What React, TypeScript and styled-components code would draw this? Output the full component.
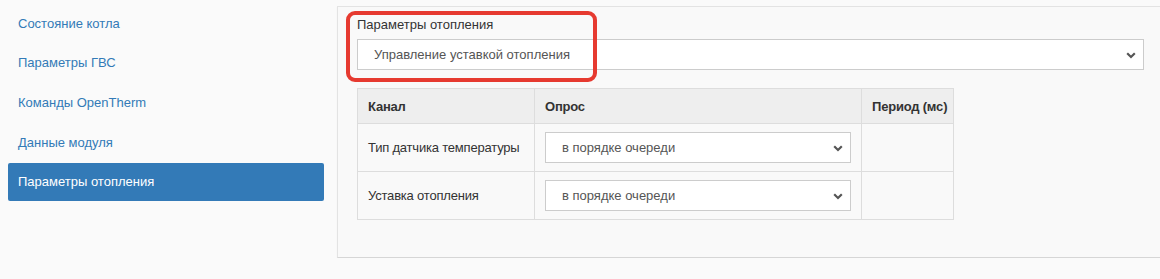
import * as React from 'react'
import styled, { createGlobalStyle } from 'styled-components'

const GlobalStyle = createGlobalStyle`
  html, body {
    margin: 0;
    padding: 0;
    background: #fafafa;
    overflow: hidden;
  }
  body {
    font-family: 'Liberation Sans', Arial, sans-serif;
    font-size: 13px;
    color: #333;
  }
`

const Page = styled.div`
  display: flex;
  align-items: flex-start;
  width: 1180px;
  padding-left: 8px;
  gap: 13px;
`

const Nav = styled.ul`
  list-style: none;
  margin: 4px 0 0;
  padding: 0;
  width: 316px;
  flex: none;
  display: flex;
  flex-direction: column;
  gap: 1.7px;
`

const NavItem = styled.li<{ active?: boolean }>`
  height: 38px;
  display: flex;
  align-items: center;
  padding: 0 10px;
  border-radius: 2px;
  color: ${({ active }) => (active ? '#fff' : '#337ab7')};
  background: ${({ active }) => (active ? '#337ab7' : 'transparent')};
  cursor: pointer;
`

const Panel = styled.section`
  position: relative;
  flex: none;
  width: 827px;
  margin-top: 6px;
  height: 252px;
  box-sizing: border-box;
  padding: 8px 19px 0;
  background: #f9f9f9;
  border: 1px solid #e3e3e3;
  border-bottom-color: #d6d6d6;
  box-shadow: 0 1px 1px rgba(0, 0, 0, 0.05);
`

const Label = styled.label`
  display: block;
  line-height: 19px;
  margin-bottom: 5px;
  color: #333;
`

const SelectWrap = styled.div`
  position: relative;
  width: 100%;
`

const Select = styled.select`
  appearance: none;
  -webkit-appearance: none;
  display: block;
  width: 100%;
  height: 31px;
  box-sizing: border-box;
  padding: 0 30px 0 16px;
  border: 1px solid #ccc;
  border-radius: 0;
  background: #fff;
  color: #555;
  font-family: inherit;
  font-size: 13px;
  outline: none;
`

const Chevron = styled.svg`
  position: absolute;
  right: 8px;
  top: 50%;
  margin-top: -3px;
  pointer-events: none;
`

const Highlight = styled.div`
  position: absolute;
  left: 8px;
  top: 4px;
  width: 251px;
  height: 71px;
  box-sizing: border-box;
  border: 4px solid #e63a30;
  border-radius: 9px;
  pointer-events: none;
`

const Table = styled.table`
  margin-top: 18px;
  width: 596px;
  border-collapse: collapse;
  table-layout: fixed;
`

const Th = styled.th<{ w: number }>`
  width: ${({ w }) => w}px;
  height: 35px;
  box-sizing: border-box;
  padding: 0 10px;
  text-align: left;
  font-weight: bold;
  white-space: nowrap;
  letter-spacing: -0.2px;
  background: #eeeeee;
  border: 1px solid #ddd;
  color: #333;
`

const Td = styled.td`
  height: 48px;
  box-sizing: border-box;
  padding: 0 10px;
  border: 1px solid #ddd;
  color: #333;
  white-space: nowrap;
  letter-spacing: -0.2px;
  vertical-align: middle;
`

const navItems = [
  'Состояние котла',
  'Параметры ГВС',
  'Команды OpenTherm',
  'Данные модуля',
  'Параметры отопления',
]

const rows = ['Тип датчика температуры', 'Уставка отопления']

const DropDown = ({ value }: { value: string }) => (
  <SelectWrap>
    <Select defaultValue={value}>
      <option>{value}</option>
    </Select>
    <Chevron width="10" height="7" viewBox="0 0 10 7">
      <path d="M1.2 1.3 L5 5 L8.8 1.3" fill="none" stroke="#555" strokeWidth="2.2" />
    </Chevron>
  </SelectWrap>
)

export default function App() {
  return (
    <>
      <GlobalStyle />
      <Page>
        <Nav>
          {navItems.map((item, i) => (
            <NavItem key={item} active={i === navItems.length - 1}>
              {item}
            </NavItem>
          ))}
        </Nav>
        <Panel>
          <Label>Параметры отопления</Label>
          <DropDown value="Управление уставкой отопления" />
          <Table>
            <thead>
              <tr>
                <Th w={177}>Канал</Th>
                <Th w={327}>Опрос</Th>
                <Th w={92}>Период (мс)</Th>
              </tr>
            </thead>
            <tbody>
              {rows.map((r) => (
                <tr key={r}>
                  <Td>{r}</Td>
                  <Td>
                    <DropDown value="в порядке очереди" />
                  </Td>
                  <Td />
                </tr>
              ))}
            </tbody>
          </Table>
          <Highlight />
        </Panel>
      </Page>
    </>
  )
}
